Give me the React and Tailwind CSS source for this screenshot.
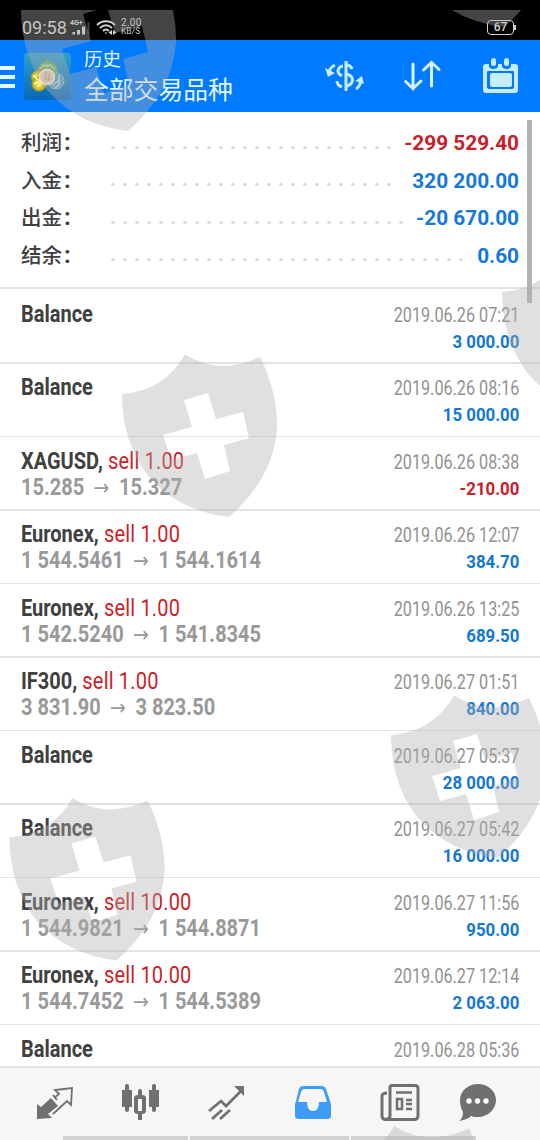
import React from "react";

const summary = [
  { label: "利润", value: "-299 529.40", dots: "w-[284px]", color: "text-[#c8202a]" },
  { label: "入金", value: "320 200.00", dots: "w-[284px]", color: "text-[#1478dc]" },
  { label: "出金", value: "-20 670.00", dots: "w-[296px]", color: "text-[#1478dc]" },
  { label: "结余", value: "0.60", dots: "w-[356px]", color: "text-[#1478dc]" },
];

const deals = [
  { symbol: "Balance", time: "2019.06.26 07:21", profit: "3 000.00" },
  { symbol: "Balance", time: "2019.06.26 08:16", profit: "15 000.00" },
  { symbol: "XAGUSD", side: "sell 1.00", open: "15.285", close: "15.327", time: "2019.06.26 08:38", profit: "-210.00" },
  { symbol: "Euronex", side: "sell 1.00", open: "1 544.5461", close: "1 544.1614", time: "2019.06.26 12:07", profit: "384.70" },
  { symbol: "Euronex", side: "sell 1.00", open: "1 542.5240", close: "1 541.8345", time: "2019.06.26 13:25", profit: "689.50" },
  { symbol: "IF300", side: "sell 1.00", open: "3 831.90", close: "3 823.50", time: "2019.06.27 01:51", profit: "840.00" },
  { symbol: "Balance", time: "2019.06.27 05:37", profit: "28 000.00" },
  { symbol: "Balance", time: "2019.06.27 05:42", profit: "16 000.00" },
  { symbol: "Euronex", side: "sell 10.00", open: "1 544.9821", close: "1 544.8871", time: "2019.06.27 11:56", profit: "950.00" },
  { symbol: "Euronex", side: "sell 10.00", open: "1 544.7452", close: "1 544.5389", time: "2019.06.27 12:14", profit: "2 063.00" },
  { symbol: "Balance", time: "2019.06.28 05:36", profit: "" },
];

const shields = [
  [-101, -386],
  [275, -490],
  [380, -102],
  [0, 0],
  [269, 341],
  [-112.5, 443.5],
  [209, 771.5],
];

const StatusBar = () => (
  <div className="flex h-10 shrink-0 items-center bg-black pt-[14px] pl-[22px] pr-[24px] text-[#d4d4d4]">
    <span className="mt-[2px] w-[45px] whitespace-nowrap text-[18px] leading-none">09:58</span>
    <svg className="ml-[3px] h-[18px] w-[20px] overflow-visible" viewBox="0 0 20 18" fill="currentColor">
      <text x="0" y="7" fontSize="7" fontWeight="700" fontFamily="Roboto, sans-serif">4G+</text>
      <path d="M2.500 14H5v2.500H2.500zM7 12h3v4.500H7zM12 8.500h3v8h-3z" />
      <path d="M17.500 4h2v12.500h-2z" opacity="0.3" />
    </svg>
    <svg className="ml-[6px] h-[18px] w-[21px]" viewBox="0 0 21 18" fill="none" stroke="currentColor" strokeWidth="1.800">
      <path d="M1 7c5-5 13-5 18 0M4 10c4-3.600 8-3.600 12 0M7 13c2-2 4-2 6 0" />
      <path d="M8.500 14.500 10 16l1.500-1.500zM16 12v5l-3.500-2.500zM17 12l3.500 2.500L17 17z" fill="currentColor" stroke="none" />
    </svg>
    <div className="ml-[4px] leading-[8px]">
      <div className="text-[10px] tracking-[0.300px]">2.00</div>
      <div className="text-[8.500px]">KB/S</div>
    </div>
    <div className="ml-auto flex items-center">
      <div className="flex h-[15px] w-[27px] items-center justify-center rounded-[4px] border border-current text-[12px] font-medium leading-none">67</div>
      <div className="h-[5px] w-[2px] bg-current" />
    </div>
  </div>
);

const AppLogo = () => (
  <svg className="h-[47px] w-[47px]" viewBox="0 0 47 47">
    <defs>
      <linearGradient id="tile" x2="0" y2="1">
        <stop stopColor="#2f9fca" />
        <stop offset="1" stopColor="#0868b8" />
      </linearGradient>
      <radialGradient id="gold">
        <stop stopColor="#fff27c" />
        <stop offset="1" stopColor="#c5a80c" />
      </radialGradient>
    </defs>
    <rect width="47" height="47" rx="3" fill="url(#tile)" />
    <path d="M23 5l3 4c4 0 6 3 7 6l1 5H13l1-5c1-3 4-6 7-6z" fill="#6fa968" />
    <path d="M16 16c4-5 11-5 15 0M19 11l4 3 4-3" fill="none" stroke="#b6d79f" strokeWidth="1.300" />
    <circle cx="32" cy="28" r="8" fill="#5799bd" stroke="#8fc0d3" />
    <path d="M28 32l8-5M31 35l5-4M35 22v9" stroke="#c0dceb" strokeWidth="1.300" />
    <circle cx="14" cy="24" r="6.500" fill="url(#gold)" stroke="#aba318" />
    <circle cx="15" cy="31" r="7" fill="url(#gold)" stroke="#a59c12" />
    <path d="M9 22l5 5M10 31l7-4M13 34l6-5" stroke="#fff7a1" strokeWidth="1.600" />
    <circle cx="23" cy="24" r="7.500" fill="#e9cfb4" stroke="#fff2e4" strokeWidth="1.500" />
    <path d="M22 19v9M25 20v8M20 26h7" stroke="#cda687" strokeWidth="1.300" />
  </svg>
);

const Header = () => (
  <header className="flex h-[72px] shrink-0 items-center bg-[#007aff] text-[#e6f8ff]">
    <div className="mt-[2px] flex w-[15px] flex-col gap-[5px]">
      <div className="h-1 bg-current" />
      <div className="h-1 bg-current" />
      <div className="h-1 bg-current" />
    </div>
    <div className="ml-[9px]">
      <AppLogo />
    </div>
    <div className="ml-[13px] mt-[3px] w-[200px]">
      <div className="text-[18.500px] leading-[24px]">历史</div>
      <div className="mt-[3px] text-[24.800px] leading-[32px]">全部交易品种</div>
    </div>
    <svg className="ml-[40px] h-[34px] w-[41px]" viewBox="0 0 41 34" fill="none" stroke="#c5edff" strokeWidth="3">
      <path d="M22 2v30" strokeWidth="3" />
      <path d="M22 6c3 0 5 1 6 4M19 7c-3 0-5 3-5 5 0 3 2 4 4 5M22 15c5 1 6.500 3 6.500 6s-3 6-6.500 6M18 28c-3-1-5-3-5-6" />
      <path d="M11 6C8 7.500 6 9 5 13" />
      <path d="M1 9l3 9 7-4z" fill="#c5edff" stroke="none" />
      <path d="M32 30c3-2 4-4 5-8" />
      <path d="M31 22l7-5 2 8z" fill="#c5edff" stroke="none" />
    </svg>
    <svg className="ml-[38px] h-[34px] w-[40px]" viewBox="0 0 40 34" fill="none" stroke="#d5f2ff" strokeWidth="3" strokeLinecap="round">
      <path d="M10 5v25M2.500 22.500l7.500 7 8-7.500M28.500 27V4M20.500 11l8-7.500 7.500 7" />
    </svg>
    <svg className="ml-[40px] h-[36px] w-[36px]" viewBox="0 0 36 36" fill="#c5edff">
      <path fillRule="evenodd" d="M3 6h3v2c0 4 9 4 9 0V6h4v2c0 4 9 4 9 0V6h4q3 0 3 3v23q0 3-3 3H3q-3 0-3-3V9q0-3 3-3zM5 13q-1 0-1 1v15q0 2 2 2h23q2 0 2-2V14q0-1-1-1z" />
      <path d="M9 15h18q2 0 2 2v10q0 2-2 2H9q-2 0-2-2V17q0-2 2-2z" />
      <rect x="8" y="0" width="5" height="8" rx="2.500" />
      <rect x="21" y="0" width="5" height="8" rx="2.500" />
    </svg>
  </header>
);

const Summary = () => (
  <section className="flex h-[175px] shrink-0 flex-col pt-[13px] pl-[21px] pr-[21px]">
    {summary.map((item) => (
      <div key={item.label} className="flex h-[37.500px] items-center">
        <span className="w-[86px] text-[20.500px] font-medium text-[#404040]">
          {item.label}
          <span className="ml-[2px] text-[24px] font-bold leading-none">:</span>
        </span>
        <div className={`mt-[7px] h-[3px] bg-[radial-gradient(circle_at_6px_1.5px,#dcdcdc_1.4px,transparent_2px)] bg-[length:12px_3px] ${item.dots}`} />
        <span className={`ml-auto whitespace-nowrap text-[20.800px] font-bold ${item.color}`}>{item.value}</span>
      </div>
    ))}
  </section>
);

const DealRow = ({ deal, index }) => (
  <div
    className={`flex shrink-0 justify-between border-[#e3e3e3] pl-[21px] pr-[21px] ${
      index === 0 ? "h-[75px] border-t-2 pt-[12px]" : index % 2 ? "h-[74px] border-t-2 pt-[10px]" : "h-[73px] border-t pt-[11px]"
    }`}
  >
    <div className="w-[280px] origin-left scale-x-[0.87] whitespace-nowrap pt-px text-[23px] leading-[26px]">
      <div>
        <span className="font-bold text-[#404040]">{deal.symbol}{deal.side && ","}</span>
        {deal.side && <span className="tracking-[0.200px] text-[#cc1f28]"> {deal.side}</span>}
      </div>
      {deal.open && (
        <div className="font-bold leading-[25px] text-[#999]">
          {deal.open}
          <span className="mx-[9px] inline-block w-[22px] text-center font-['DejaVu_Sans',sans-serif] text-[22px] font-normal leading-none">→</span>
          {deal.close}
        </div>
      )}
    </div>
    <div className="whitespace-nowrap pt-[2px] text-right text-[19.500px] leading-[26px]">
      <div className="origin-right scale-x-[0.83] text-[#929292]">{deal.time}</div>
      <div className={`origin-right scale-x-[0.885] text-[19px] font-bold leading-[25px] ${deal.profit.startsWith("-") ? "text-[#c8202a]" : "text-[#1478d2]"}`}>{deal.profit}</div>
    </div>
  </div>
);

const TabBar = () => (
  <nav className="flex h-[74px] shrink-0 flex-col justify-between border-t-2 border-[#e3e3e3] bg-[#f6f6f6] text-[#707070]">
    <div className="flex pt-[16px] pl-[36px]">
      <svg className="h-[38px] w-[38px]" viewBox="0 0 38 38" fill="none" stroke="currentColor" strokeWidth="1.800">
        <path d="M1 35V20l4 3 10-9 7 8-10 8 4 4z" fill="currentColor" stroke="none" />
        <path d="M17 30 31 17l4 4 1-17-17 2 4 4-5 4M21 16l-4-5" />
      </svg>
      <svg className="ml-[47px] h-[40px] w-[38px]" viewBox="0 0 38 40" fill="currentColor">
        <path fillRule="evenodd" d="M1 6h3V2q0-2 2-2t2 2v4h3v17H8v3q0 2-2 2t-2-2v-3H1zM28 6h3V2q0-2 2-2t2 2v4h3v17h-3v3q0 2-2 2t-2-2v-3h-3zM17 11V7q0-2 2-2t2 2v4q4 0 4 3v13q0 3-4 3v6h-4v-6q-4 0-4-3V14q0-3 4-3zm0 4v12h4V15z" />
      </svg>
      <svg className="ml-[49px] h-[38px] w-[38px]" viewBox="0 0 38 38" fill="none" stroke="currentColor" strokeWidth="2.700">
        <path d="M1 27 13 17l5 5L34 6M4 35l10-9M12 35l10-9" />
        <path d="M26 2h10v10z" fill="currentColor" stroke="none" />
      </svg>
      <svg className="ml-[48px] h-[38px] w-[38px] text-[#3d9cf8]" viewBox="0 0 38 38">
        <path fillRule="evenodd" fill="currentColor" d="M10 2h17q4 0 5 3l4 12q1 2 1 4v11q0 3-4 3H5q-4 0-4-3V21q0-2 1-4L5 5q1-3 5-3zm0 3q-2 0-3 3L4 18h9q0 9 6 9t6-9h8L30 8q-1-3-3-3z" />
      </svg>
      <svg className="ml-[48px] h-[38px] w-[40px]" viewBox="0 0 40 38" fill="none" stroke="currentColor" strokeWidth="3">
        <path d="M10 3.500q0-2 2-2h23q3 0 3 3v27q0 4-4 4H6q-4 0-4-4V12q0-3 5-3M10 3v29q0 3-4 3" />
        <path d="M16 8.500h16M26 16h6M26 20h6M26 25h6" strokeWidth="2.500" />
        <path d="M17 15h5v10h-5z" strokeWidth="2.500" />
      </svg>
      <svg className="ml-[38px] h-[38px] w-[40px]" viewBox="0 0 40 38">
        <path d="M20 0c10 0 18 7 18 16S30 33 20 33c-2 0-5 0-7-1-3 3-7 4-12 5 3-2 4-5 4-9-2-3-3-7-3-12C2 7 10 0 20 0z" fill="currentColor" />
        <circle cx="11" cy="17" r="2.700" fill="#fff" />
        <circle cx="19.500" cy="17" r="2.700" fill="#fff" />
        <circle cx="28" cy="17" r="2.700" fill="#fff" />
      </svg>
    </div>
    <div className="flex gap-[2px] pl-[63px]">
      <div className="h-1 w-[125px] bg-[#d2d2d2]" />
      <div className="h-1 w-[159px] bg-[#d2d2d2]" />
      <div className="h-1 w-[125px] bg-[#d2d2d2]" />
    </div>
  </nav>
);

const Watermark = () => (
  <svg className="pointer-events-none absolute left-0 top-[10px] h-[1130px] w-[540px]" viewBox="0 10 540 1130">
    {shields.map(([x, y]) => (
      <path
        key={`${x},${y}`}
        transform={`translate(${x} ${y})`}
        fill="#afafaf"
        fillOpacity="0.390"
        fillRule="evenodd"
        d="M122 394Q164 391 185 354.500Q219 376 260 357Q278 393 277 429Q273 479 229 517Q179 511 149 477Q122 443 122 394ZM184 400L192 427L163 435L171 460L197 453L205 479L230 471L224 445L249 438L243 412L216 419L208 393Z"
      />
    ))}
  </svg>
);

const App = () => {
  return (
    <div className="relative flex h-[1140px] w-[540px] flex-col overflow-hidden bg-white font-['Roboto','Noto_Sans_CJK_SC',sans-serif]">
      <StatusBar />
      <Header />
      <main className="flex min-h-0 flex-1 flex-col overflow-hidden">
        <Summary />
        {deals.map((deal, index) => (
          <DealRow key={deal.time} deal={deal} index={index} />
        ))}
      </main>
      <TabBar />
      {/* Scroll indicator */}
      <div className="absolute right-[8px] top-[120px] h-[183px] w-[5px] bg-[#b2b2b2]" />
      <Watermark />
    </div>
  );
};

export default App;
